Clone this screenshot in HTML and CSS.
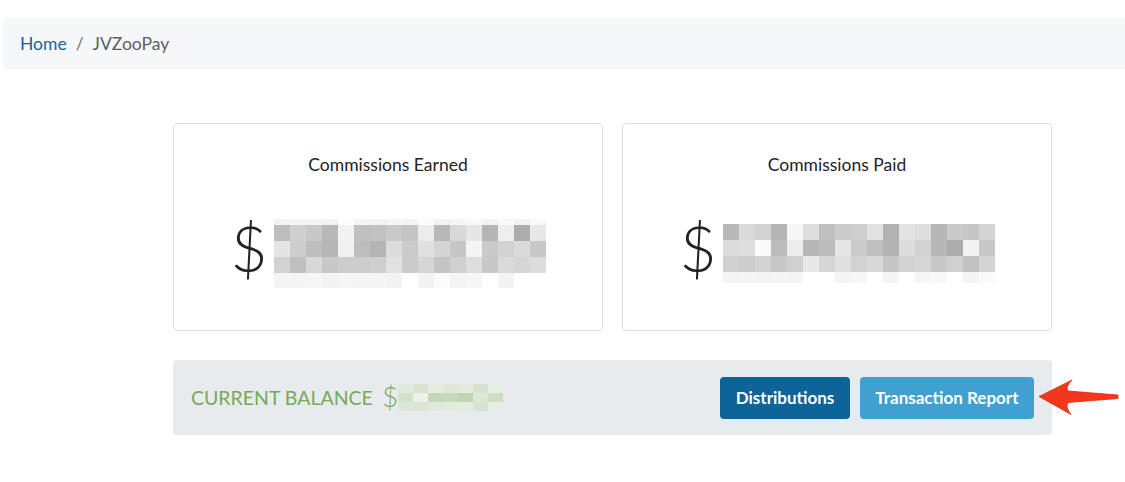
FILE: index.html
```html
<!DOCTYPE html>
<html lang="en">
<head>
    <meta charset="UTF-8">
    <meta name="viewport" content="width=device-width, initial-scale=1.0">
    <title>JVZooPay</title>
    <link rel="stylesheet" href="styles.css">
</head>
<body>

    <!-- Breadcrumb -->
    <div class="page">
        <nav class="breadcrumb">
            <a href="#">Home</a>
            <span class="sep">/</span>
            <span class="current">JVZooPay</span>
        </nav>

        <!-- Commission summary -->
        <div class="summary">
            <div class="cards">
                <div class="card">
                    <h4>Commissions Earned</h4>
                    <div class="amount">
                        <span class="dollar">$</span>
                        <div class="masked" id="earned"></div>
                    </div>
                </div>
                <div class="card">
                    <h4>Commissions Paid</h4>
                    <div class="amount">
                        <span class="dollar">$</span>
                        <div class="masked" id="paid"></div>
                    </div>
                </div>
            </div>

            <div class="balance">
                <div class="balance-label">
                    CURRENT BALANCE
                    <span class="balance-dollar">$</span>
                    <div class="masked" id="balance"></div>
                </div>
                <div class="balance-actions">
                    <button class="btn btn-dark">Distributions</button>
                    <button class="btn btn-light">Transaction Report</button>
                </div>
                <svg class="pointer" width="82" height="37" viewBox="0 0 82 37">
                    <path d="M1 17.5 L34 1 Q27 8 30 12 L80 16 L80 19.5 L30 23.5 Q27 28 33 35.5 Z" fill="#f2371d" stroke="#d92a12" stroke-width="0.8" stroke-linejoin="round"/>
                </svg>
            </div>
        </div>
    </div>

    <script>
        // Hidden amounts are drawn as a mosaic of grey cells
        let earned = {
            rows: [6, 16, 16, 16, 15],
            cells: [
                ["f3f3f3", "f4f4f4", "f4f4f4", "f2f2f2", "fdfdfd", "f4f4f4", "f3f3f3", "f6f6f6", "f3f3f3", "fbfbfb", "f3f3f3", "f6f6f6", "f8f8f8", "f2f2f2", "f9f9f9", "f2f2f2", "f8f8f8"],
                ["bdbdbd", "cfcfcf", "c8c8c8", "b8b8b8", "f2f2f2", "c0c0c0", "c2c2c2", "c9c9c9", "c4c4c4", "ececec", "b8b8b8", "d9d9d9", "e6e6e6", "b5b5b5", "eeeeee", "adadad", "e8e8e8"],
                ["e4e4e4", "cdcdcd", "bebebe", "b6b6b6", "f0f0f0", "bdbdbd", "b4b4b4", "dcdcdc", "cbcbcb", "e0e0e0", "d5d5d5", "c6c6c6", "f4f4f4", "cacaca", "d2d2d2", "dadada", "c8c8c8"],
                ["d2d2d2", "c0c0c0", "d8d8d8", "c8c8c8", "cdcdcd", "cdcdcd", "cfcfcf", "e1e1e1", "cbcbcb", "d6d6d6", "c4c4c4", "d0d0d0", "dddddd", "c8c8c8", "dadada", "d6d6d6", "dcdcdc"],
                ["f4f4f4", "f5f5f5", "f6f6f6", "f3f3f3", "f6f6f6", "f5f5f5", "f5f5f5", "f3f3f3", "ffffff", "f3f3f3", "fbfbfb", "f4f4f4", "f6f6f6", "ffffff", "f3f3f3", "ffffff", "ffffff"]
            ],
            width: 16
        };

        let paid = {
            rows: [16, 16, 16, 11],
            cells: [
                ["b9b9b9", "dadada", "d2d2d2", "b5b5b5", "f7f7f7", "dedede", "c0c0c0", "cbcbcb", "cecece", "e2e2e2", "b2b2b2", "e4e4e4", "dedede", "b6b6b6", "cacaca", "c6c6c6", "d4d4d4"],
                ["dcdcdc", "dedede", "fafafa", "bcbcbc", "ececec", "b7b7b7", "bcbcbc", "e6e6e6", "cbcbcb", "c0c0c0", "b3b3b3", "dcdcdc", "d2d2d2", "b7b7b7", "adadad", "f2f2f2", "c8c8c8"],
                ["d0d0d0", "cccccc", "d2d2d2", "c8c8c8", "d0d0d0", "e8e8e8", "d6d6d6", "e0e0e0", "d2d2d2", "d9d9d9", "c6c6c6", "d2d2d2", "d6d6d6", "c8c8c8", "d0d0d0", "c2c2c2", "d4d4d4"],
                ["f4f4f4", "f5f5f5", "f4f4f4", "f5f5f5", "f4f4f4", "ffffff", "ffffff", "f5f5f5", "f6f6f6", "ffffff", "f4f4f4", "ffffff", "f6f6f6", "f8f8f8", "ffffff", "f4f4f4", "fafafa"]
            ],
            width: 16
        };

        let balance = {
            rows: [9, 9, 9],
            cells: [
                ["e1eadc", "d8e4d1", "e5ede1", "dfe9da", "e3ebdf", "d5e2ce", "e7eee3"],
                ["d3e2cb", "ebf1e8", "c3d8b9", "c5d9bb", "bed4b3", "dce7d6", "cddec5"],
                ["dde7d7", "dbe6d5", "e0e9db", "e1eadc", "e4ece0", "d6e3cf", "e6ede2"]
            ],
            width: 15
        };

        let draw_mosaic = (id, data) => {
            let box = document.querySelector("#" + id);
            data.cells.forEach((row, i) => {
                let line = document.createElement("div");
                line.setAttribute("class", "masked-row");
                line.style.height = data.rows[i] + "px";
                row.forEach((color) => {
                    let cell = document.createElement("span");
                    cell.style.width = data.width + "px";
                    cell.style.backgroundColor = "#" + color;
                    line.appendChild(cell);
                });
                box.appendChild(line);
            });
        };

        draw_mosaic("earned", earned);
        draw_mosaic("paid", paid);
        draw_mosaic("balance", balance);
    </script>

</body>
</html>
```

FILE: styles.css
```css
body {
    font-family: Lato, "Liberation Sans", sans-serif;
    background-color: #ffffff;
    color: #222;
    margin: 0;
    padding: 0;
}

.page {
    padding-top: 18px;
}

/* Breadcrumb */
.breadcrumb {
    margin-left: 3px;
    height: 51px;
    padding: 0 17px;
    display: flex;
    align-items: center;
    background-color: #f5f7f9;
    border-radius: 4px 0 0 4px;
    font-size: 17.5px;
}

.breadcrumb a {
    color: #16649b;
    text-decoration: none;
}

.breadcrumb .sep {
    color: #6c757d;
    margin: 0 9px;
}

.breadcrumb .current {
    color: #595f66;
}

/* Summary */
.summary {
    position: relative;
    margin: 54px 0 0 173px;
    width: 879px;
}

.cards {
    display: grid;
    grid-template-columns: 1fr 1fr;
    gap: 19px;
}

.card {
    height: 208px;
    box-sizing: border-box;
    padding-top: 30px;
    border: 1px solid #dcdfe2;
    border-radius: 4px;
    text-align: center;
}

.card h4 {
    margin: 0;
    font-size: 17.5px;
    font-weight: 400;
    line-height: 1.2;
    color: #1f2328;
}

.amount {
    margin-top: 38px;
    height: 80px;
    display: flex;
    justify-content: center;
    align-items: center;
}

.dollar {
    font-size: 64px;
    font-weight: 300;
    line-height: 1;
    color: #222;
    margin-right: 6px;
    margin-top: -10px;
}

.masked-row {
    display: flex;
}

.masked-row span {
    display: block;
}

/* Current balance bar */
.balance {
    margin-top: 29px;
    height: 75px;
    padding: 0 18px;
    display: flex;
    justify-content: space-between;
    align-items: center;
    background-color: #e8ebee;
    border-radius: 4px;
}

.balance-label {
    display: flex;
    align-items: center;
    font-size: 19.5px;
    color: #76a958;
}

.balance-dollar {
    font-size: 28px;
    font-weight: 300;
    margin: -4px 0 0 9px;
}

.balance-actions {
    display: flex;
    gap: 10px;
}

.btn {
    height: 42px;
    padding: 0 15.5px;
    border: none;
    border-radius: 4px;
    font-family: Lato, "Liberation Sans", sans-serif;
    font-size: 17px;
    font-weight: 700;
    color: #ffffff;
    cursor: pointer;
}

.btn-dark {
    background-color: #0d6499;
}

.btn-light {
    background-color: #40a0d0;
}

/* Red arrow pointing at the report button */
.pointer {
    position: absolute;
    left: 865px;
    top: 256px;
}
```
